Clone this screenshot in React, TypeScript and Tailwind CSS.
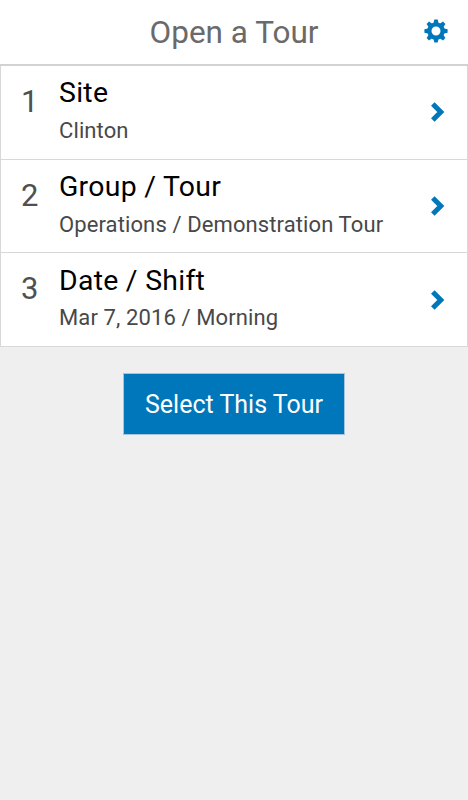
const ROWS = [
  { step: 1, title: "Site", value: "Clinton" },
  { step: 2, title: "Group / Tour", value: "Operations / Demonstration Tour" },
  { step: 3, title: "Date / Shift", value: "Mar 7, 2016 / Morning" },
];

function GearIcon() {
  return (
    <svg width="24" height="24" viewBox="0 0 24 24" fill="#0077bb">
      <circle cx="12" cy="12" r="6.6" fill="none" stroke="#0077bb" strokeWidth="4.2" />
      {[0, 45, 90, 135, 180, 225, 270, 315].map((angle) => (
        <path key={angle} d="M10.3 0.4h3.4l1 4.6H9.3z" transform={`rotate(${angle} 12 12)`} />
      ))}
    </svg>
  );
}

function ChevronIcon() {
  return (
    <svg width="14" height="20" viewBox="0 0 14 20" fill="none" stroke="#0077bb" strokeWidth="5">
      <path d="M1.8 2l8 8-8 8" />
    </svg>
  );
}

export default function App() {
  return (
    <div className="flex h-[800px] w-[468px] flex-col bg-[#efefef] font-[Roboto,sans-serif]">
      <header className="flex h-[66px] shrink-0 items-center border-b-2 border-[#d2d2d2] bg-white">
        <div className="w-16" />
        <h1 className="flex-1 pt-px text-center text-[31.5px] leading-[64px] text-[#6a6a6a]">Open a Tour</h1>
        <button className="flex w-16 justify-center pb-[3px]" aria-label="Settings">
          <GearIcon />
        </button>
      </header>

      <ul className="border-x border-[#d8d8d8] bg-white">
        {ROWS.map((row) => (
          <li key={row.step} className="flex h-[93.67px] border-b border-[#d8d8d8] pl-5 pr-[22px]">
            <span className="w-[38px] pt-[18px] text-[31px] leading-9 text-[#505050]">{row.step}</span>
            <div className="flex-1 pt-[9.3px]">
              <div className="text-[28.4px] leading-9 tracking-[0.28px] text-black">{row.title}</div>
              <div className="pt-[5.7px] text-[22px] leading-7 tracking-[0.11px] text-[#484848]">{row.value}</div>
            </div>
            <div className="flex items-center">
              <ChevronIcon />
            </div>
          </li>
        ))}
      </ul>

      <button className="mt-[26px] ml-[123px] h-[62px] w-[222px] border border-[#a9c3dc] bg-[#0077bb] pt-px text-[25px] text-white">
        Select This Tour
      </button>
    </div>
  );
}
